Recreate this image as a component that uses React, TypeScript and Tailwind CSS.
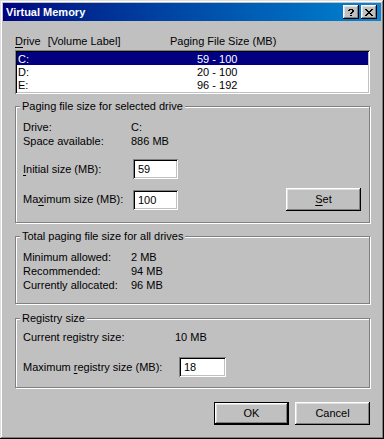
const raised =
  "shadow-[inset_-1px_-1px_0_#000,inset_1px_1px_0_#fff,inset_-2px_-2px_0_#808080,inset_2px_2px_0_#dfdfdf]";
const sunken =
  "shadow-[inset_1px_1px_0_#808080,inset_-1px_-1px_0_#fff,inset_2px_2px_0_#000,inset_-2px_-2px_0_#c0c0c0]";
const etched = "border border-[#808080] shadow-[inset_1px_1px_0_#fff,1px_1px_0_#fff]";

const drives = [
  { drive: "C:", size: "59 - 100", selected: true },
  { drive: "D:", size: "20 - 100", selected: false },
  { drive: "E:", size: "96 - 192", selected: false },
];

// pixel glyphs for the caption buttons
const closeGlyph = [
  "11....11",
  ".11..11.",
  "..1111..",
  "...11...",
  "..1111..",
  ".11..11.",
  "11....11",
];
const helpGlyph = [
  ".1111.",
  "11..11",
  "....11",
  "...11.",
  "..11..",
  "......",
  "..11..",
];

const Glyph = ({ rows }: { rows: string[] }) => (
  <svg
    width={rows[0].length}
    height={rows.length}
    viewBox={`0 0 ${rows[0].length} ${rows.length}`}
    shapeRendering="crispEdges"
  >
    {rows.map((row, y) =>
      row
        .split("")
        .map((c, x) => (c === "1" ? <rect key={`${x}-${y}`} x={x} y={y} width={1} height={1} fill="#000" /> : null))
    )}
  </svg>
);

const CaptionButton = ({ rows }: { rows: string[] }) => (
  <div className={`flex h-[14px] w-[16px] items-center justify-center bg-[#c0c0c0] ${raised}`}>
    <Glyph rows={rows} />
  </div>
);

const Mn = ({ children }: { children: React.ReactNode }) => (
  <span className="underline decoration-1 underline-offset-[2px]">{children}</span>
);

const Group = ({ title, className, children }: { title: string; className: string; children: React.ReactNode }) => (
  <div className={`relative ${etched} ${className}`}>
    <span className="absolute -top-[7px] left-[4px] bg-[#c0c0c0] px-[2px] leading-[13px]">{title}</span>
    {children}
  </div>
);

const Field = ({ value, width }: { value: string; width: string }) => (
  <input
    readOnly
    defaultValue={value}
    className={`h-[20px] ${width} bg-white pl-[5px] text-[11px] leading-[20px] outline-none ${sunken}`}
  />
);

const Button = ({ children, isDefault }: { children: React.ReactNode; isDefault?: boolean }) => (
  <button
    className={`flex h-[23px] w-[75px] items-center justify-center bg-[#c0c0c0] text-[11px] ${
      isDefault ? "border border-black" : ""
    } ${raised}`}
  >
    {children}
  </button>
);

export default function App() {
  return (
    <div
      className={`flex h-[439px] w-[384px] flex-col bg-[#c0c0c0] p-[3px] font-['Liberation_Sans',Arial,sans-serif] text-[11px] text-black shadow-[inset_-1px_-1px_0_#000,inset_1px_1px_0_#dfdfdf,inset_-2px_-2px_0_#808080,inset_2px_2px_0_#fff]`}
    >
      {/* Title bar */}
      <div className="flex h-[18px] items-center bg-gradient-to-r from-[#000080] to-[#1084d0] pl-[3px] pr-[4px]">
        <span className="font-bold text-white">Virtual Memory</span>
        <div className="ml-auto flex gap-[2px]">
          <CaptionButton rows={helpGlyph} />
          <CaptionButton rows={closeGlyph} />
        </div>
      </div>

      <div className="flex flex-col pl-[12px] pr-[11px]">
        {/* List header */}
        <div className="mt-[14px] flex h-[13px] leading-[13px]">
          <span className="w-[155px]">
            <Mn>D</Mn>rive<span className="ml-[7px]">[Volume Label]</span>
          </span>
          <span>Paging File Size (MB)</span>
        </div>

        {/* Drive list */}
        <div className={`mt-[2px] h-[44px] bg-white p-[2px] ${sunken}`}>
          {drives.map((d) => (
            <div
              key={d.drive}
              className={`flex h-[13px] pl-[1px] pt-[1px] leading-[13px] ${
                d.selected ? "bg-[#000080] text-white" : ""
              }`}
            >
              <span className="w-[179px]">{d.drive}</span>
              <span>{d.size}</span>
            </div>
          ))}
        </div>

        {/* Selected drive */}
        <Group title="Paging file size for selected drive" className="mt-[12px] pb-[11px] pl-[7px] pr-[8px] pt-[13px]">
          <div className="flex leading-[14px]">
            <span className="w-[108px]">Drive:</span>
            <span>C:</span>
          </div>
          <div className="flex leading-[14px]">
            <span className="w-[108px]">Space available:</span>
            <span>886 MB</span>
          </div>
          <div className="mt-[11px] flex h-[20px] items-center">
            <span className="w-[110px]">
              <Mn>I</Mn>nitial size (MB):
            </span>
            <Field value="59" width="w-[45px]" />
          </div>
          <div className="mt-[9px] flex h-[23px] items-center">
            <span className="w-[110px]">
              Ma<Mn>x</Mn>imum size (MB):
            </span>
            <Field value="100" width="w-[45px]" />
            <div className="ml-auto">
              <Button>
                <Mn>S</Mn>et
              </Button>
            </div>
          </div>
        </Group>

        {/* Totals */}
        <Group title="Total paging file size for all drives" className="mt-[13px] pb-[11px] pl-[7px] pt-[13px]">
          {[
            ["Minimum allowed:", "2 MB"],
            ["Recommended:", "94 MB"],
            ["Currently allocated:", "96 MB"],
          ].map(([label, value]) => (
            <div key={label} className="flex leading-[14px]">
              <span className="w-[108px]">{label}</span>
              <span>{value}</span>
            </div>
          ))}
        </Group>

        {/* Registry */}
        <Group title="Registry size" className="mt-[14px] pb-[10px] pl-[7px] pt-[11px]">
          <div className="flex leading-[14px]">
            <span className="w-[152px]">Current registry size:</span>
            <span>10 MB</span>
          </div>
          <div className="mt-[13px] flex h-[20px] items-center">
            <span className="w-[156px]">
              Maximum <Mn>r</Mn>egistry size (MB):
            </span>
            <Field value="18" width="w-[47px]" />
          </div>
        </Group>

        {/* Dialog buttons */}
        <div className="mt-[14px] flex justify-end gap-[6px]">
          <Button isDefault>OK</Button>
          <Button>Cancel</Button>
        </div>
      </div>
    </div>
  );
}
